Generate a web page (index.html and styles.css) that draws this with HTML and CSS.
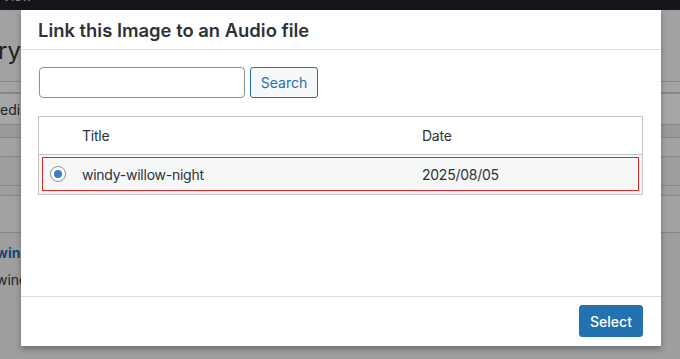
FILE: index.html
```html
<!DOCTYPE html>
<html lang="en">
<head>
<meta charset="utf-8">
<title>Link this Image to an Audio file</title>
<link rel="stylesheet" href="styles.css">
</head>
<body>
<div class="page">
  <div class="adminbar"><span class="adminbar-text">View</span></div>
  <div class="bg-block bg-head"><span class="bg-heading">ry</span></div>
  <div class="bg-block bg-band"></div>
  <div class="bg-block bg-edit"><span class="bg-text">edi</span></div>
  <div class="bg-block bg-b1"></div>
  <div class="bg-block bg-b2"></div>
  <div class="bg-block bg-b3"></div>
  <div class="bg-block bg-b4"></div>
  <div class="bg-block bg-b5"></div>
  <div class="bg-item">
    <span class="bg-link">windy-willow-night</span>
    <span class="bg-text">windy-willow-night</span>
  </div>
</div>

<div class="modal" role="dialog" aria-labelledby="modal-title">
  <header class="modal-header">
    <h1 id="modal-title" class="modal-title">Link this Image to an Audio file</h1>
  </header>
  <div class="modal-body">
    <form class="search-row" onsubmit="return false">
      <input class="search-input" type="search" aria-label="Search">
      <button class="btn btn-secondary" type="button">Search</button>
    </form>
    <div class="results">
      <div class="results-head">
        <div class="row-inner">
          <span class="cell cell-check"></span>
          <span class="cell">Title</span>
          <span class="cell">Date</span>
        </div>
      </div>
      <div class="results-row">
        <div class="row-inner row-selected">
          <span class="cell cell-check"><span class="radio"><span class="radio-dot"></span></span></span>
          <span class="cell">windy-willow-night</span>
          <span class="cell">2025/08/05</span>
        </div>
      </div>
    </div>
  </div>
  <footer class="modal-footer">
    <button class="btn btn-primary" type="button">Select</button>
  </footer>
</div>
</body>
</html>
```

FILE: styles.css
```css
* { box-sizing: border-box; }

html, body {
  margin: 0;
  padding: 0;
  width: 680px;
  height: 359px;
  overflow: hidden;
}

body {
  background: #9e9e9f;
  font-family: Inter, "Liberation Sans", sans-serif;
  position: relative;
}

/* Dimmed page behind the modal */
.page {
  display: flex;
  flex-direction: column;
}

.adminbar {
  height: 10px;
  background: #141619;
  overflow: hidden;
  position: relative;
}

.adminbar-text {
  display: block;
  font-size: 13px;
  line-height: 13px;
  color: #8a8c8e;
  margin-top: -10px;
  margin-left: 2px;
}

.bg-block {
  border-bottom: 1px solid #868687;
}

.bg-head {
  height: 72px;
  background: #a2a2a3;
  padding-top: 27px;
}

.bg-heading {
  font-size: 24px;
  line-height: 28px;
  color: #1e2124;
  margin-left: -2px;
}

.bg-band { height: 12px; background: #a4a4a5; border-bottom-width: 2px; }

.bg-edit {
  height: 31px;
  background: #a6a6a7;
  padding-top: 6px;
}

.bg-text {
  display: block;
  font-size: 14px;
  line-height: 20px;
  color: #1e2124;
  white-space: nowrap;
}

.bg-b1 { height: 13px; background: #9a9a9b; }
.bg-b2 { height: 19px; background: #a2a2a3; }
.bg-b3 { height: 29px; background: #9e9e9f; }
.bg-b4 { height: 10px; background: #9e9e9f; }
.bg-b5 { height: 37px; background: #a2a2a3; }

.bg-item {
  padding-top: 10px;
  display: flex;
  flex-direction: column;
  gap: 7px;
  margin-left: -4px;
}

.bg-link {
  font-size: 14px;
  line-height: 20px;
  font-weight: 700;
  color: #164973;
  white-space: nowrap;
}

/* Modal */
.modal {
  position: absolute;
  left: 21px;
  top: 10px;
  width: 640px;
  height: 336px;
  background: #fff;
  display: flex;
  flex-direction: column;
  box-shadow: 0 3px 6px rgba(0, 0, 0, 0.3);
}

.modal-header {
  height: 40px;
  border-bottom: 1px solid #dcdcde;
  padding: 0 17px;
  display: flex;
  align-items: center;
}

.modal-title {
  margin: 0;
  font-size: 18.4px;
  font-weight: 600;
  color: #2c3338;
  line-height: 24px;
  padding-top: 1px;
}

.modal-body {
  flex: 1;
  padding: 17px 18px 0 17px;
}

.search-row {
  display: flex;
  gap: 5px;
  margin: 0 0 18px 1px;
}

.search-input {
  width: 206px;
  height: 31px;
  border: 1px solid #8c8f94;
  border-radius: 4px;
  background: #fff;
  font: inherit;
  font-size: 14px;
  padding: 0 8px;
}

.btn {
  font-family: inherit;
  font-size: 14px;
  line-height: 1;
  border-radius: 3px;
  cursor: pointer;
}

.btn-secondary {
  width: 68px;
  height: 31px;
  background: #f6f7f7;
  color: #2271b1;
  border: 1px solid #2271b1;
}

.btn-primary {
  width: 64px;
  height: 32px;
  background: #2271b1;
  color: #fff;
  border: 1px solid #2271b1;
  font-weight: 500;
  padding-top: 2px;
}

.results {
  width: 605px;
  border: 1px solid #c3c4c7;
}

.results-head {
  height: 38px;
  border-bottom: 1px solid #c3c4c7;
  padding: 0 3px;
  display: flex;
  align-items: center;
}

.results-head .row-inner {
  border-color: transparent;
}

.results-row {
  background: #f6f7f7;
  padding: 2px 3px 3px;
}

.row-inner {
  display: grid;
  grid-template-columns: 39px 340px 1fr;
  align-items: center;
  height: 34px;
  width: 100%;
  border: 1px solid transparent;
  font-size: 14px;
  letter-spacing: -0.25px;
  color: #2c3338;
}

.row-selected {
  border-color: #e0262b;
}

.cell-check {
  display: flex;
  align-items: center;
  padding-left: 7px;
}

.radio {
  width: 16px;
  height: 16px;
  border-radius: 50%;
  border: 1px solid #8c8f94;
  background: #fff;
  display: flex;
  align-items: center;
  justify-content: center;
}

.radio-dot {
  width: 8px;
  height: 8px;
  border-radius: 50%;
  background: #3582c4;
}

.modal-footer {
  height: 50px;
  border-top: 1px solid #dcdcde;
  display: flex;
  justify-content: flex-end;
  align-items: flex-start;
  padding: 8px 18px 0 0;
}
```
